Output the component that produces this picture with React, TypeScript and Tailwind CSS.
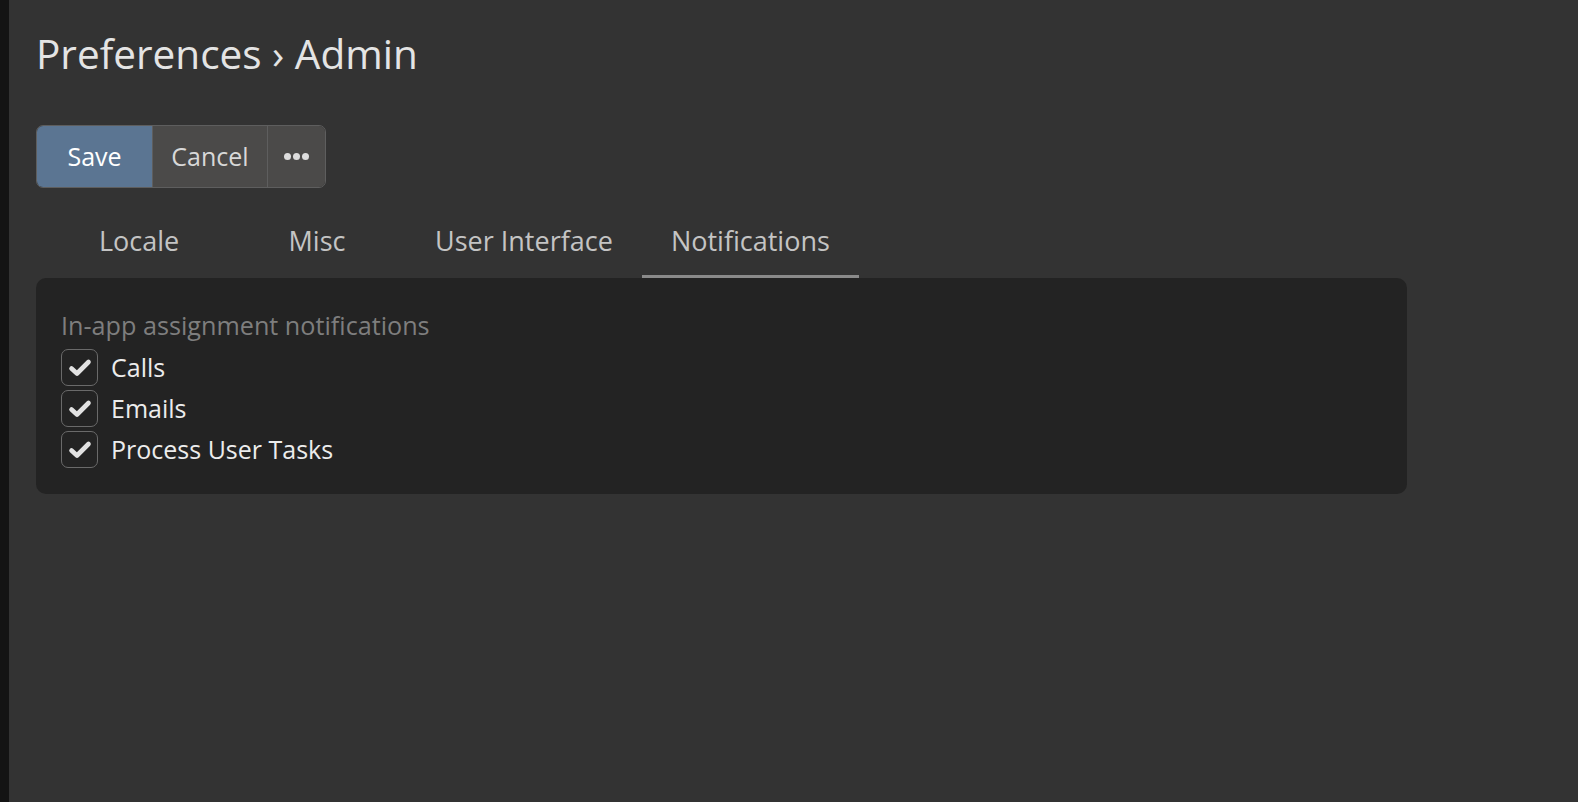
import React, { useState } from 'react';

const TABS = ['Locale', 'Misc', 'User Interface', 'Notifications'];

const ITEMS = ['Calls', 'Emails', 'Process User Tasks'];

function CheckRow({ label }: { label: string }) {
  const [on, setOn] = useState(true);
  return (
    <label className="flex h-[41px] items-center gap-[13px] cursor-pointer">
      <span
        onClick={() => setOn(!on)}
        className="flex h-[37px] w-[37px] items-center justify-center rounded-[7px] border border-[#6a6a6a]"
      >
        {on && (
          <svg width="24" height="20" viewBox="0 0 24 20">
            <path d="M3.5 10.5 L9 15.5 L20.5 4" fill="none" stroke="#e2e2e2" strokeWidth="4.6" strokeLinecap="round" strokeLinejoin="round" />
          </svg>
        )}
      </span>
      <span className="text-[25px] text-[#ececec]">{label}</span>
    </label>
  );
}

export default function App() {
  const [tab, setTab] = useState('Notifications');

  return (
    <div className="flex h-screen w-full font-['Open_Sans',sans-serif]">
      <div className="w-[9px] shrink-0 bg-[#141414]" />
      <main className="flex-1 bg-[#333333] pl-[27px] pt-[27px]">
        <h1 className="text-[40.5px] leading-[54px] text-[#e4e4e4]">Preferences › Admin</h1>

        <div className="mt-[44px] flex h-[63px] w-fit overflow-hidden rounded-[7px] border border-[#5e5e5e]">
          <button className="w-[115px] bg-[#5b7592] text-[25px] text-white">Save</button>
          <button className="w-[115px] border-l border-[#5e5e5e] bg-[#4b4a49] text-[25px] text-[#d8d8d8]">Cancel</button>
          <button className="flex w-[58px] items-center justify-center gap-[2px] border-l border-[#5e5e5e] bg-[#4b4a49]">
            <span className="h-[7px] w-[7px] rounded-full bg-[#dddddd]" />
            <span className="h-[7px] w-[7px] rounded-full bg-[#dddddd]" />
            <span className="h-[7px] w-[7px] rounded-full bg-[#dddddd]" />
          </button>
        </div>

        <div className="mt-[20px] flex pl-[14px]">
          {TABS.map((t) => (
            <button
              key={t}
              onClick={() => setTab(t)}
              className={`h-[70px] min-w-[178px] border-b-[3px] px-[29px] text-[27px] text-[#c4c4c4] ${
                tab === t ? 'border-[#8a8a8a]' : 'border-transparent'
              }`}
            >
              {t}
            </button>
          ))}
        </div>

        <section className="w-[1371px] rounded-[10px] bg-[#232323] px-[25px] pb-[24px] pt-[30px]">
          <div className="text-[25.2px] leading-[34px] text-[#7e7e7e]">In-app assignment notifications</div>
          <div className="mt-[5px] flex flex-col">
            {ITEMS.map((i) => (
              <CheckRow key={i} label={i} />
            ))}
          </div>
        </section>
      </main>
    </div>
  );
}
